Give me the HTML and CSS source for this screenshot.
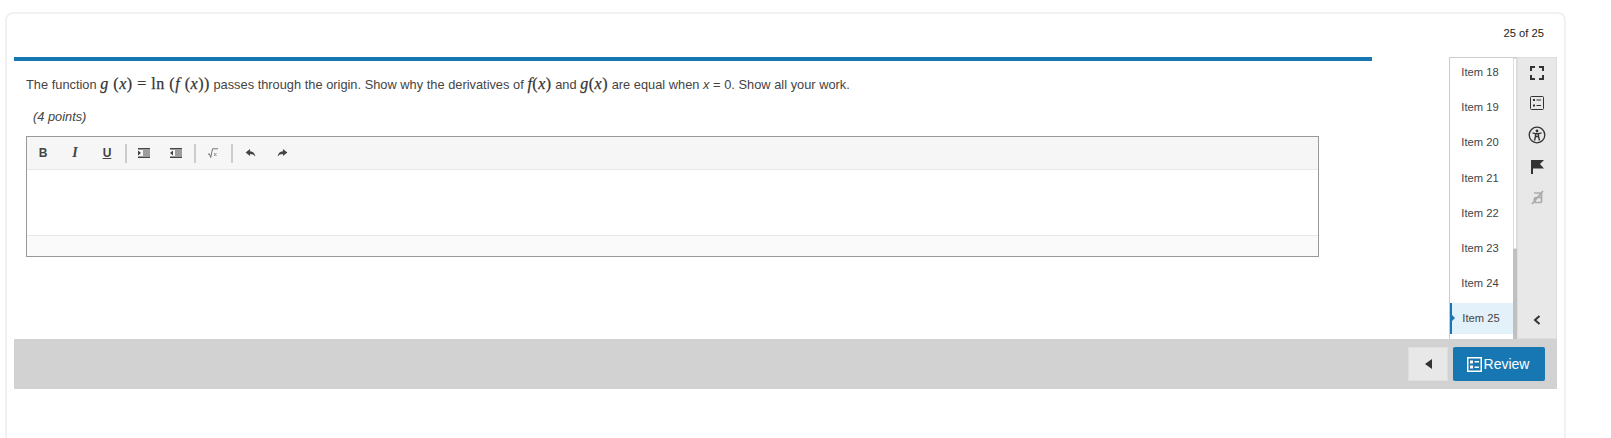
FILE: index.html
```html
<!DOCTYPE html>
<html lang="en">

<head>
  <meta charset="UTF-8">
  <title>Item 25</title>
  <link rel="stylesheet" href="styles.css">
</head>

<body>
  <div class="card">
    <div class="counter">25 of 25</div>
    <div class="main">
      <div class="question">
        <div class="progress"></div>
        <p class="prompt">The function <span class="math"><i>g</i> (<i>x</i>) = ln (<i>f</i> (<i>x</i>))</span> passes through the origin. Show why the derivatives of <span class="math"><i>f</i>(<i>x</i>)</span> and <span class="math"><i>g</i>(<i>x</i>)</span> are equal when <em>x</em> = 0. Show all your work.</p>
        <p class="points">(4 points)</p>
        <div class="editor">
          <div class="toolbar">
            <span class="tool bold">B</span>
            <span class="tool italic">I</span>
            <span class="tool underline">U</span>
            <span class="sep"></span>
            <span class="tool">
              <svg width="12" height="10" viewBox="0 0 12 10"><path d="M0 0h12v1.500H0zM5 2.500h7v1H5zM5 4.500h7v1H5zM5 6.500h7v1H5zM0 8.500h12V10H0zM0 2.500L3 5 0 7.500z" fill="#444"/></svg>
            </span>
            <span class="tool">
              <svg width="12" height="10" viewBox="0 0 12 10"><path d="M0 0h12v1.500H0zM5 2.500h7v1H5zM5 4.500h7v1H5zM5 6.500h7v1H5zM0 8.500h12V10H0zM3 2.500L0 5l3 2.500z" fill="#444"/></svg>
            </span>
            <span class="sep"></span>
            <span class="tool">
              <svg width="10" height="10" viewBox="0 0 10 10"><path d="M0 6.500l1.300-.8L2.700 9.500 4.500.8H10" fill="none" stroke="#666" stroke-width=".9"/><path d="M6 5l2.500 3M8.500 5L6 8" stroke="#888" stroke-width=".9"/></svg>
            </span>
            <span class="sep"></span>
            <span class="tool">
              <svg width="11" height="8" viewBox="0 0 11 9"><path d="M5 0L0 4l5 4V5.500c2.500 0 4.500.8 6 3C10.500 5 8.500 2.800 5 2.500z" fill="#444"/></svg>
            </span>
            <span class="tool">
              <svg width="11" height="8" viewBox="0 0 11 9"><path d="M6 0l5 4-5 4V5.500c-2.500 0-4.500.8-6 3C.5 5 2.500 2.800 6 2.500z" fill="#444"/></svg>
            </span>
          </div>
          <div class="editor-body"></div>
          <div class="editor-foot"></div>
        </div>
      </div>
      <div class="side">
        <div class="items">
          <ul class="item-list">
            <li>Item 18</li>
            <li>Item 19</li>
            <li>Item 20</li>
            <li>Item 21</li>
            <li>Item 22</li>
            <li>Item 23</li>
            <li>Item 24</li>
            <li class="current">Item 25</li>
          </ul>
          <div class="scroll"><div class="thumb"></div></div>
        </div>
        <div class="tools">
          <svg width="14" height="14" viewBox="0 0 14 14"><path d="M1 5V1h4M9 1h4v4M13 9v4H9M5 13H1V9" fill="none" stroke="#333" stroke-width="2"/></svg>
          <svg width="14" height="14" viewBox="0 0 14 14"><rect x=".5" y=".5" width="13" height="13" rx="1" fill="none" stroke="#333"/><path d="M3 3h2v2H3zM6.500 3.500H11v1H6.500zM3 8.500h2v2H3zM6.500 9H11v1H6.500z" fill="#333"/></svg>
          <svg width="18" height="18" viewBox="0 0 18 18"><circle cx="9" cy="9" r="7.800" fill="none" stroke="#333" stroke-width="1.300"/><circle cx="9" cy="5" r="1.400" fill="#333"/><path d="M4.500 6.800L7.500 7.700V10.500L6.500 14.500M13.500 6.800L10.500 7.700V10.500L11.500 14.500M7.500 7.700h3M7.800 10.500h2.400" fill="none" stroke="#333" stroke-width="1.400"/></svg>
          <svg width="13" height="14" viewBox="0 0 13 14"><path d="M0 0h13L9 4l4 4.500H2V14H0z" fill="#333"/></svg>
          <svg width="13" height="15" viewBox="0 0 13 15"><path d="M3 3h7.500M10.500 3v9.500M10.500 7.500H5.500c-3 0-3 5 0 5h5M1 14L12 1" fill="none" stroke="#aaa" stroke-width="1.700"/></svg>
          <svg class="collapse" width="8" height="10" viewBox="0 0 8 10"><path d="M6.500 1L2 5l4.500 4" fill="none" stroke="#333" stroke-width="2"/></svg>
        </div>
      </div>
    </div>
    <div class="footer">
      <button class="back"><svg width="7" height="10" viewBox="0 0 7 10"><path d="M7 0v10L0 5z" fill="#333"/></svg></button>
      <button class="review">
        <svg width="15" height="15" viewBox="0 0 15 15"><path fill-rule="evenodd" d="M0 0h15v15H0zM1.500 1.500v12h12v-12zM3 3.500h3v3H3zM7.500 4H12v1.500H7.500zM3 8.500h3v3H3zM7.500 9.500H12V11H7.500z" fill="#fff"/></svg>
        Review
      </button>
    </div>
  </div>
</body>

</html>
```
FILE: styles.css
```css
html,
body {
  margin: 0;
  height: 100%;
  background: white;
  overflow: hidden;
}

body {
  padding: 12px 45px 0 5px;
  box-sizing: border-box;
  font-family: "Liberation Sans", Arial, sans-serif;
  font-size: 12px;
  color: #333;
}

.card {
  height: 440px;
  box-sizing: border-box;
  padding: 0 6px 0 7px;
  border: 2px solid #f1f1f1;
  border-radius: 8px;
}

.counter {
  height: 43px;
  padding: 13px 14px 0 0;
  box-sizing: border-box;
  text-align: right;
  font-size: 11.200px;
  color: #222;
}

.main {
  display: flex;
  height: 282px;
}

.question {
  width: 1358px;
}

.progress {
  height: 4px;
  background: #1777b2;
}

.prompt {
  margin: 12px 0 0 12px;
  height: 22px;
  line-height: 22px;
  font-size: 12.800px;
  word-spacing: .1px;
  color: #444;
}

.math {
  font-family: "Liberation Serif", serif;
  font-size: 16px;
  color: #333;
  letter-spacing: .5px;
  -webkit-text-stroke: .25px #333;
}

.points {
  margin: 14px 0 0 19px;
  font-size: 12.800px;
  line-height: 16px;
  font-style: italic;
  color: #444;
}

.editor {
  margin: 11px 0 0 12px;
  width: 1293px;
  height: 121px;
  box-sizing: border-box;
  border: 1px solid #999;
  display: flex;
  flex-direction: column;
}

.toolbar {
  height: 32px;
  background: #f6f6f6;
  border-bottom: 1px solid #e8e8e8;
  display: flex;
  align-items: center;
}

.tool {
  width: 32px;
  display: flex;
  justify-content: center;
  font-size: 12px;
  color: #444;
}

.bold {
  font-weight: bold;
}

.italic {
  font-family: "Liberation Serif", serif;
  font-style: italic;
  font-weight: bold;
  font-size: 14px;
}

.underline {
  text-decoration: underline;
  font-weight: bold;
}

.sep {
  width: 2px;
  height: 19px;
  margin: 0 1px 0 2px;
  background: #ccc;
}

.editor-body {
  flex: 1;
}

.editor-foot {
  height: 20px;
  background: #fafafa;
  border-top: 1px solid #e8e8e8;
}

.side {
  margin-left: 77px;
  display: flex;
}

.items {
  display: flex;
  width: 68px;
  box-sizing: border-box;
  border-left: 1px solid #ccc;
  border-top: 1px solid #ccc;
  background: white;
}

.item-list {
  list-style: none;
  margin: 0;
  padding: 0;
  width: 63px;
  font-size: 11.200px;
  color: #444;
}

.item-list li {
  height: 35.200px;
  line-height: 29px;
  padding-right: 3px;
  text-align: center;
  box-sizing: border-box;
}

.item-list .current {
  position: relative;
  height: 31px;
  line-height: 30px;
  margin-top: -1px;
  padding-right: 3px;
  background: #e3f1fa;
  border-left: 2px solid #1777b2;
}

.current::before {
  content: "";
  position: absolute;
  left: 0;
  top: 12px;
  border: 3px solid transparent;
  border-left-color: #1777b2;
}

.scroll {
  width: 4px;
  background: #c0c0c0;
}

.thumb {
  height: 191px;
  background: white;
  border: 1px solid #ddd;
  box-sizing: border-box;
}

.tools {
  width: 40px;
  background: #e8e8e8;
  box-sizing: border-box;
  border: 1px solid #ddd;
  display: flex;
  flex-direction: column;
  align-items: center;
  padding-top: 8px;
  gap: 16px;
}

.collapse {
  margin-top: 94px;
}

.footer {
  height: 50px;
  width: 1543px;
  background: #d2d2d2;
  display: flex;
  justify-content: flex-end;
  align-items: center;
  gap: 5px;
  padding-right: 12px;
  box-sizing: border-box;
}

.back {
  width: 40px;
  height: 34px;
  background: #e8e8e8;
  border: 1px solid #dedede;
  padding: 0;
}

.review {
  width: 92px;
  height: 34px;
  background: #1777b2;
  color: white;
  border: 0;
  border-radius: 2px;
  font-family: "Liberation Sans", Arial, sans-serif;
  font-size: 14px;
  display: flex;
  align-items: center;
  justify-content: center;
  gap: 2px;
  padding: 0 2px 0 0;
}
```
